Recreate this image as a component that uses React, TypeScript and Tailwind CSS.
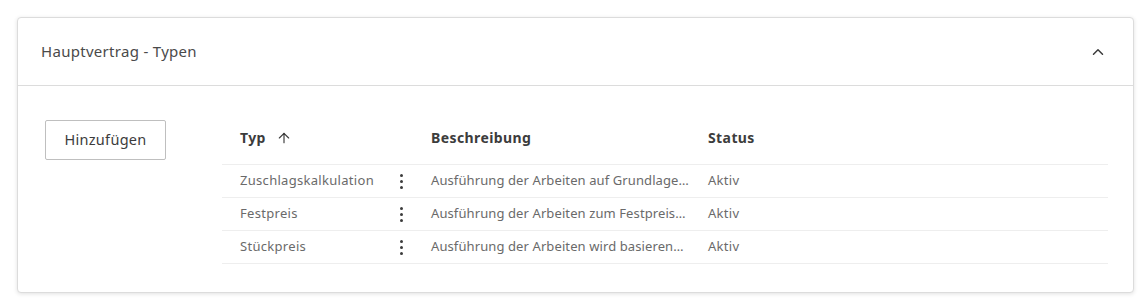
import { ChevronUp, ArrowUp } from "lucide-react";

const rows = [
  { typ: "Zuschlagskalkulation", desc: "Ausführung der Arbeiten auf Grundlage…", status: "Aktiv" },
  { typ: "Festpreis", desc: "Ausführung der Arbeiten zum Festpreis…", status: "Aktiv" },
  { typ: "Stückpreis", desc: "Ausführung der Arbeiten wird basieren…", status: "Aktiv" },
];

function Dots() {
  return (
    <div className="flex flex-col items-center gap-[3px]">
      <span className="h-[3px] w-[3px] rounded-full bg-[#3c3c3c]" />
      <span className="h-[3px] w-[3px] rounded-full bg-[#3c3c3c]" />
      <span className="h-[3px] w-[3px] rounded-full bg-[#3c3c3c]" />
    </div>
  );
}

export default function App() {
  return (
    <div className="min-h-[308px] bg-white p-[17px] pr-[9px]" style={{ fontFamily: '"Noto Sans", "Open Sans", sans-serif' }}>
      <div className="rounded-[4px] border border-[#dcdcdc] bg-white shadow-[0_1px_4px_rgba(0,0,0,0.12)]">
        {/* Header */}
        <div className="flex h-[68px] items-center justify-between border-b border-[#dcdcdc] pl-[23px] pr-[26px]">
          <span className="text-[15px] tracking-[0.3px] text-[#4a4a4a]">Hauptvertrag - Typen</span>
          <ChevronUp className="h-[18px] w-[18px] text-[#3c3c3c]" strokeWidth={2} />
        </div>

        {/* Body */}
        <div className="flex pb-[28px] pl-[27px] pr-[25px] pt-[34px]">
          <div className="w-[177px] shrink-0">
            <button className="h-[40px] w-[121px] rounded-[2px] border border-[#bfbfbf] bg-white text-[14.5px] tracking-[0.3px] text-[#3c3c3c]">
              Hinzufügen
            </button>
          </div>

          <div className="flex-1">
            <div className="flex h-[45px] items-start border-b border-[#eeeeee] pt-[7px] text-[14px] font-bold tracking-[0.4px] text-[#3c3c3c]">
              <div className="flex w-[209px] items-center gap-[10px] pl-[18px]">
                Typ
                <ArrowUp className="h-[16px] w-[16px] text-[#3c3c3c]" strokeWidth={1.75} />
              </div>
              <div className="w-[277px]">Beschreibung</div>
              <div>Status</div>
            </div>
            {rows.map((r) => (
              <div key={r.typ} className="flex h-[33px] items-center border-b border-[#eeeeee] text-[13px] tracking-[0.3px] text-[#6a6a6a]">
                <div className="flex w-[209px] items-center pl-[18px]">
                  <span className="w-[160px] whitespace-nowrap">{r.typ}</span>
                  <Dots />
                </div>
                <div className="w-[277px] whitespace-nowrap tracking-[0.1px]">{r.desc}</div>
                <div>{r.status}</div>
              </div>
            ))}
          </div>
        </div>
      </div>
    </div>
  );
}
